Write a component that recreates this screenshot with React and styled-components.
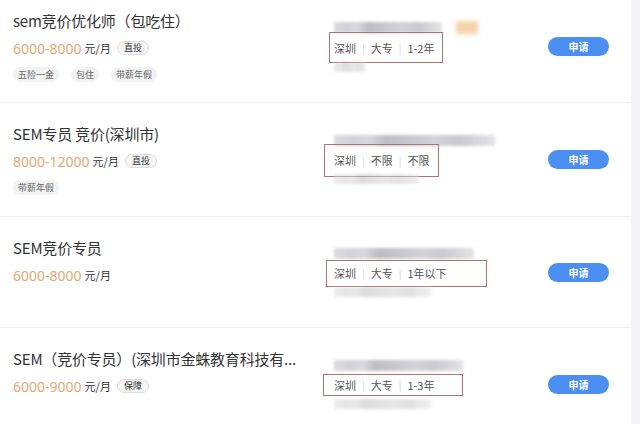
import React from "react";
import styled, { createGlobalStyle } from "styled-components";

const Global = createGlobalStyle`
  html, body { margin: 0; padding: 0; background: #fff; }
  body { font-family: "Noto Sans", "Noto Sans CJK SC", sans-serif; overflow: hidden; }
  #root { width: 640px; height: 424px; overflow: hidden; }
`;

const Page = styled.div`
  display: flex;
  width: 640px;
  height: 424px;
  overflow: hidden;
`;

const List = styled.div`
  flex: 1;
  margin-top: -10px;
  display: flex;
  flex-direction: column;
`;

const Track = styled.div`
  width: 9px;
  background: #f4f4f6;
`;

const Row = styled.div`
  box-sizing: border-box;
  flex: none;
  height: ${(p) => p.$h}px;
  border-bottom: 1px solid #efeff1;
  display: flex;
  align-items: stretch;
`;

const Left = styled.div`
  width: 321px;
  padding: 21px 0 0 13px;
  box-sizing: border-box;
  display: flex;
  flex-direction: column;
`;

const Title = styled.div`
  font-family: "Noto Sans CJK SC", sans-serif;
  font-size: 15px;
  line-height: 20px;
  color: #333;
  white-space: nowrap;
  letter-spacing: -0.2px;
`;

const SalaryLine = styled.div`
  display: flex;
  align-items: center;
  margin-top: 7px;
  height: 20px;
`;

const Salary = styled.span`
  font-family: "Noto Sans", sans-serif;
  font-size: 14px;
  color: #e2a874;
`;

const Unit = styled.span`
  font-family: "Noto Sans CJK SC", sans-serif;
  font-size: 11px;
  color: #333;
  margin-left: 3px;
`;

const Badge = styled.span`
  margin-left: 6px;
  font-family: "Noto Sans CJK SC", sans-serif;
  font-size: 9px;
  line-height: 12px;
  color: #333;
  padding: 0 6px;
  border: 1px solid #dcdcdc;
  background: #f6f6f6;
  border-radius: 8px;
`;

const Tags = styled.div`
  display: flex;
  gap: 12px;
  margin-top: 9px;
`;

const Tag = styled.span`
  font-family: "Noto Sans CJK SC", sans-serif;
  font-size: 9px;
  line-height: 15px;
  color: #666;
  padding: 0 5px;
  background: #f2f2f3;
  border-radius: 7px;
`;

const Right = styled.div`
  flex: 1;
  display: flex;
  align-items: center;
  padding-left: 13px;
  padding-right: 22px;
`;

const Info = styled.div`
  flex: 1;
  display: flex;
  flex-direction: column;
  gap: 6px;
`;

const Blur = styled.div`
  height: ${(p) => p.$h || 9}px;
  width: ${(p) => p.$w}px;
  filter: blur(1.4px);
  background: linear-gradient(
    90deg,
    #dcdcde 0%,
    #d2d2d4 12%,
    #d8d8da 22%,
    #bdbdbf 32%,
    #c9c9cb 48%,
    #d3d3d5 62%,
    #cacacc 78%,
    #e4e4e6 100%
  );
  opacity: ${(p) => p.$o || 1};
`;

const BlurLine = styled.div`
  display: flex;
  align-items: center;
  gap: 14px;
`;

const Orange = styled.div`
  width: 22px;
  height: 13px;
  filter: blur(2px);
  background: #f5d3ac;
`;

const Meta = styled.div`
  position: relative;
  display: flex;
  align-items: center;
  gap: 6px;
  height: 16px;
  font-family: "Noto Sans CJK SC", sans-serif;
  font-size: 11px;
  color: #555;
`;

const Sep = styled.span`
  color: #d0d0d0;
  font-size: 10px;
`;

const Mark = styled.div`
  position: absolute;
  left: ${(p) => p.$l}px;
  top: ${(p) => p.$t}px;
  width: ${(p) => p.$w}px;
  height: ${(p) => p.$h}px;
  border: 1px solid #a97474;
  box-sizing: border-box;
  pointer-events: none;
`;

const Apply = styled.button`
  width: 61px;
  height: 19px;
  border: none;
  border-radius: 10px;
  background: #4a8ff1;
  color: #fff;
  font-family: "Noto Sans CJK SC", sans-serif;
  font-size: 10px;
  font-weight: 700;
  padding: 0;
  line-height: 19px;
`;

const jobs = [
  {
    h: 113,
    title: "sem竞价优化师（包吃住）",
    salary: "6000-8000",
    badge: "直投",
    tags: ["五险一金", "包住", "带薪年假"],
    meta: ["深圳", "大专", "1-2年"],
    top: 108,
    orange: true,
    bottom: 32,
    mark: { l: -5, t: -8, w: 114, h: 31 },
  },
  {
    h: 114,
    title: "SEM专员 竞价(深圳市)",
    salary: "8000-12000",
    badge: "直投",
    tags: ["带薪年假"],
    meta: ["深圳", "不限", "不限"],
    top: 161,
    bottom: 85,
    mark: { l: -10, t: -8, w: 115, h: 33 },
  },
  {
    h: 111,
    title: "SEM竞价专员",
    salary: "6000-8000",
    tags: [],
    meta: ["深圳", "大专", "1年以下"],
    top: 140,
    bottom: 97,
    mark: { l: -8, t: -5, w: 161, h: 27 },
  },
  {
    h: 113,
    title: "SEM（竞价专员）(深圳市金蛛教育科技有...",
    salary: "6000-9000",
    badge: "保障",
    tags: [],
    meta: ["深圳", "大专", "1-3年"],
    top: 129,
    bottom: 97,
    mark: { l: -11, t: -3, w: 140, h: 22 },
  },
];

export default function App() {
  return (
    <>
      <Global />
      <Page>
        <List>
          {jobs.map((j, i) => (
            <Row key={i} $h={j.h}>
              <Left>
                <Title>{j.title}</Title>
                <SalaryLine>
                  <Salary>{j.salary}</Salary>
                  <Unit>元/月</Unit>
                  {j.badge && <Badge>{j.badge}</Badge>}
                </SalaryLine>
                {j.tags.length > 0 && (
                  <Tags>
                    {j.tags.map((t) => (
                      <Tag key={t}>{t}</Tag>
                    ))}
                  </Tags>
                )}
              </Left>
              <Right>
                <Info>
                  <BlurLine>
                    <Blur $w={j.top} $h={11} />
                    {j.orange && <Orange />}
                  </BlurLine>
                  <Meta>
                    <Mark $l={j.mark.l} $t={j.mark.t} $w={j.mark.w} $h={j.mark.h} />
                    {j.meta.map((m, k) => (
                      <React.Fragment key={k}>
                        {k > 0 && <Sep>|</Sep>}
                        <span>{m}</span>
                      </React.Fragment>
                    ))}
                  </Meta>
                  <Blur $w={j.bottom} $h={10} $o={0.55} />
                </Info>
                <Apply>申请</Apply>
              </Right>
            </Row>
          ))}
        </List>
        <Track />
      </Page>
    </>
  );
}
